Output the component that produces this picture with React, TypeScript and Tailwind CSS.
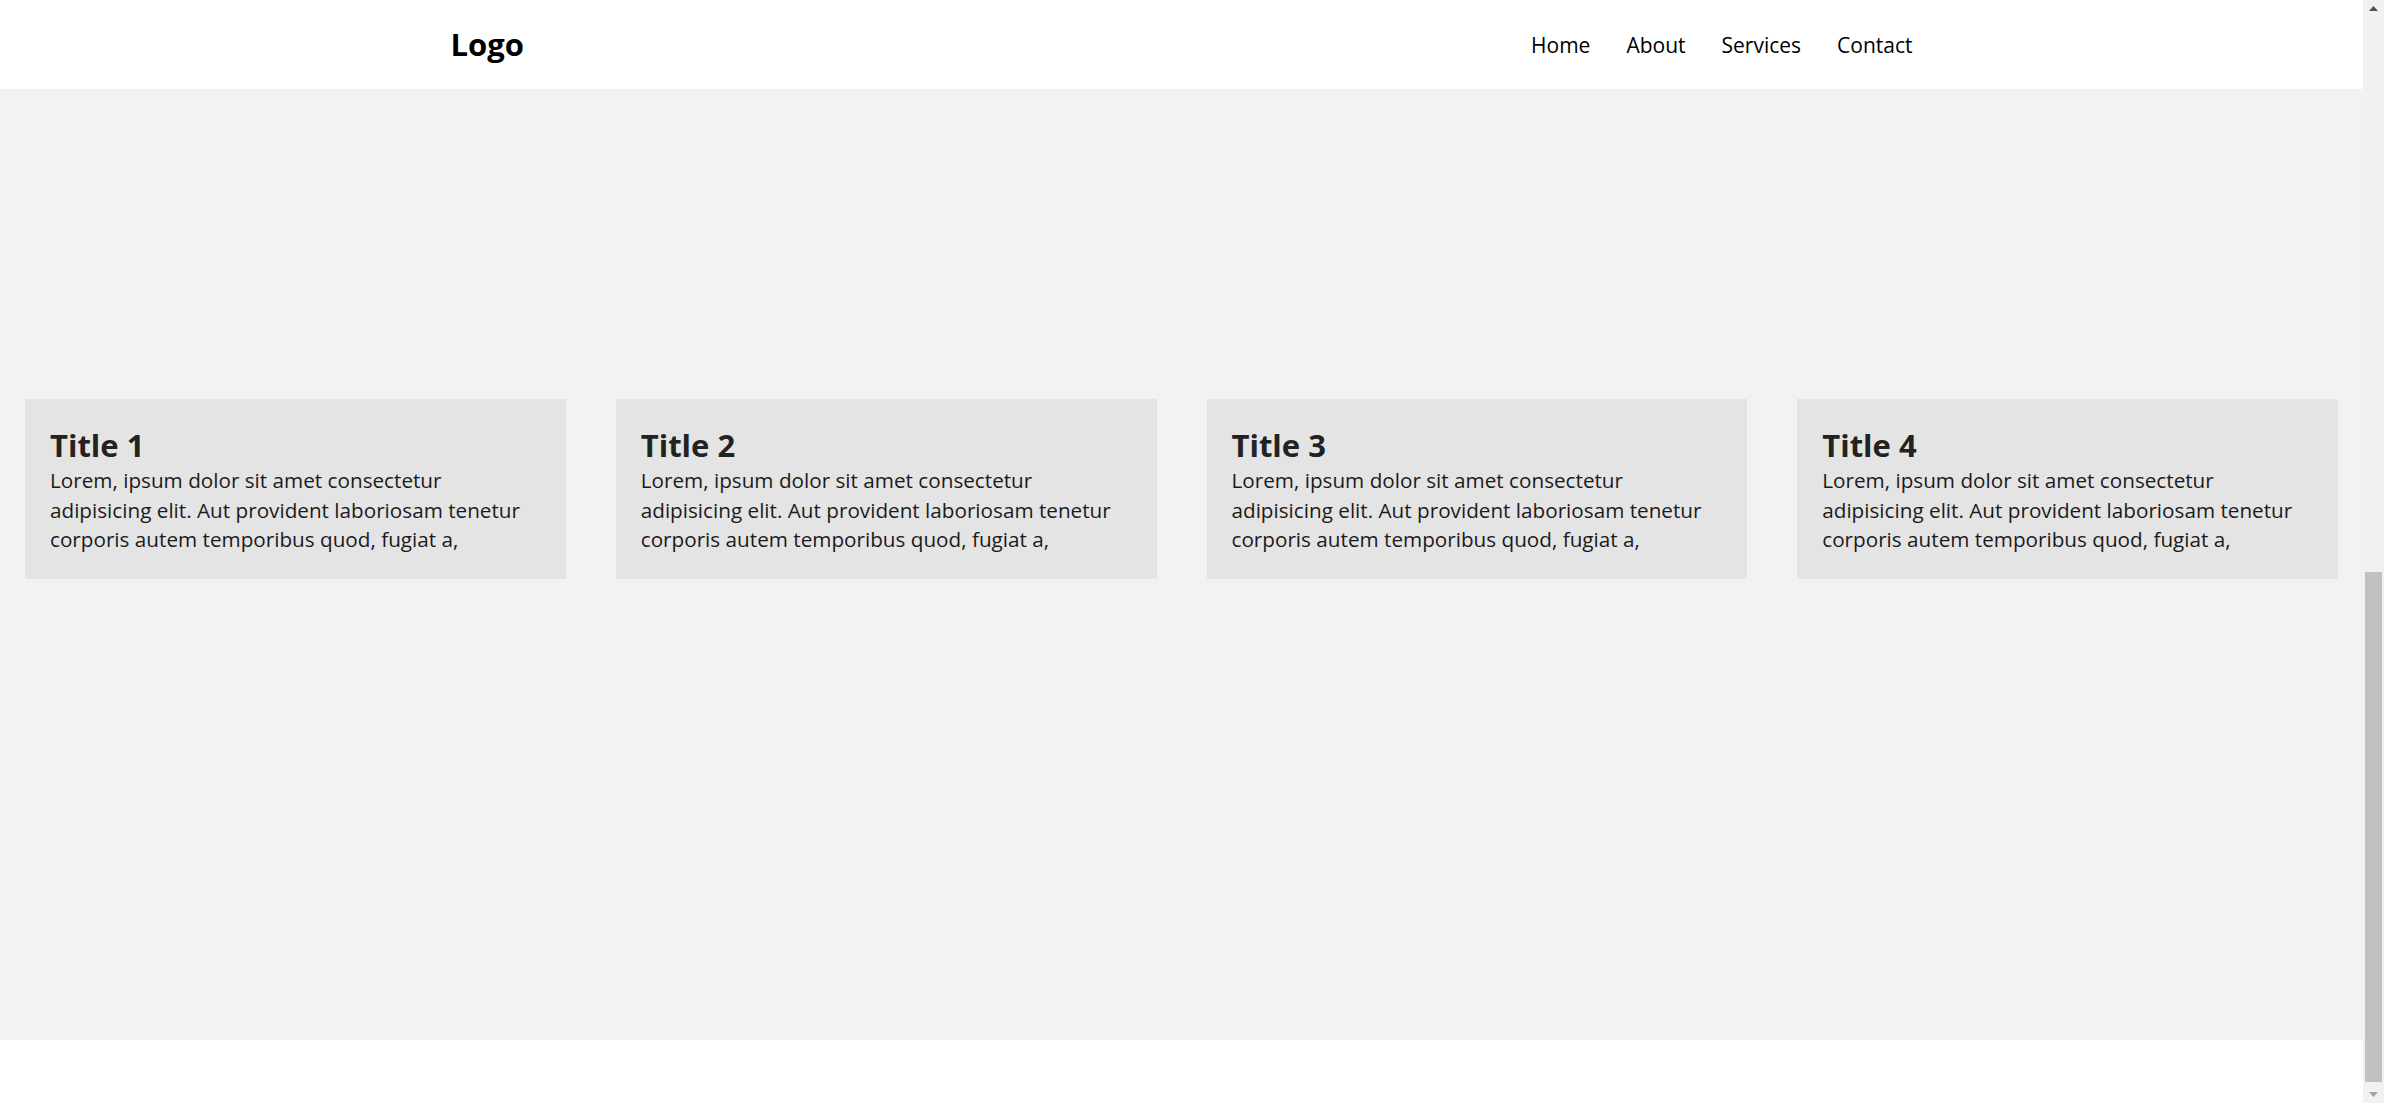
const cards = [1, 2, 3, 4]

const lorem =
  'Lorem, ipsum dolor sit amet consectetur adipisicing elit. Aut provident laboriosam tenetur corporis autem temporibus quod, fugiat a,'

function Scrollbar() {
  return (
    <div className="w-[21px] h-screen bg-[#f1f1f1] flex flex-col items-center">
      <div className="h-[17px] w-full flex items-center justify-center">
        <svg width="9" height="5" viewBox="0 0 9 5"><path d="M4.5 0L9 5H0z" fill="#505050" /></svg>
      </div>
      <div className="flex-1" />
      <div className="w-[17px] h-[510px] bg-[#c1c1c1]" />
      <div className="h-[4px]" />
      <div className="h-[17px] w-full flex items-center justify-center">
        <svg width="9" height="5" viewBox="0 0 9 5"><path d="M0 0H9L4.5 5z" fill="#a3a3a3" /></svg>
      </div>
    </div>
  )
}

export default function App() {
  return (
    <div className="flex h-screen overflow-hidden bg-white font-['Open_Sans','Liberation_Sans',sans-serif]">
      <div className="flex-1 flex flex-col">
        {/* header */}
        <header className="h-[89px] bg-white flex items-center">
          <div className="w-[1462px] mx-auto flex items-center justify-between">
            <div className="text-[31px] font-bold text-black leading-none">Logo</div>
            <nav className="flex items-center gap-[36px] text-[21px] text-black mt-[3px]">
              <a>Home</a>
              <a>About</a>
              <a>Services</a>
              <a>Contact</a>
            </nav>
          </div>
        </header>

        {/* cards section */}
        <section className="h-[951px] bg-[#f3f1f2] pt-[310px] px-[25px]">
          <div className="flex gap-[50px]">
            {cards.map(n => (
              <div key={n} className="flex-1 h-[180px] bg-[#e4e4e4] p-[25px]">
                <h2 className="text-[31px] font-bold leading-[42px] text-[#222]">Title {n}</h2>
                <p className="text-[20.7px] leading-[29.5px] text-[#1b1b1b]">{lorem}</p>
              </div>
            ))}
          </div>
        </section>

        <div className="flex-1 bg-white" />
      </div>
      <Scrollbar />
    </div>
  )
}
